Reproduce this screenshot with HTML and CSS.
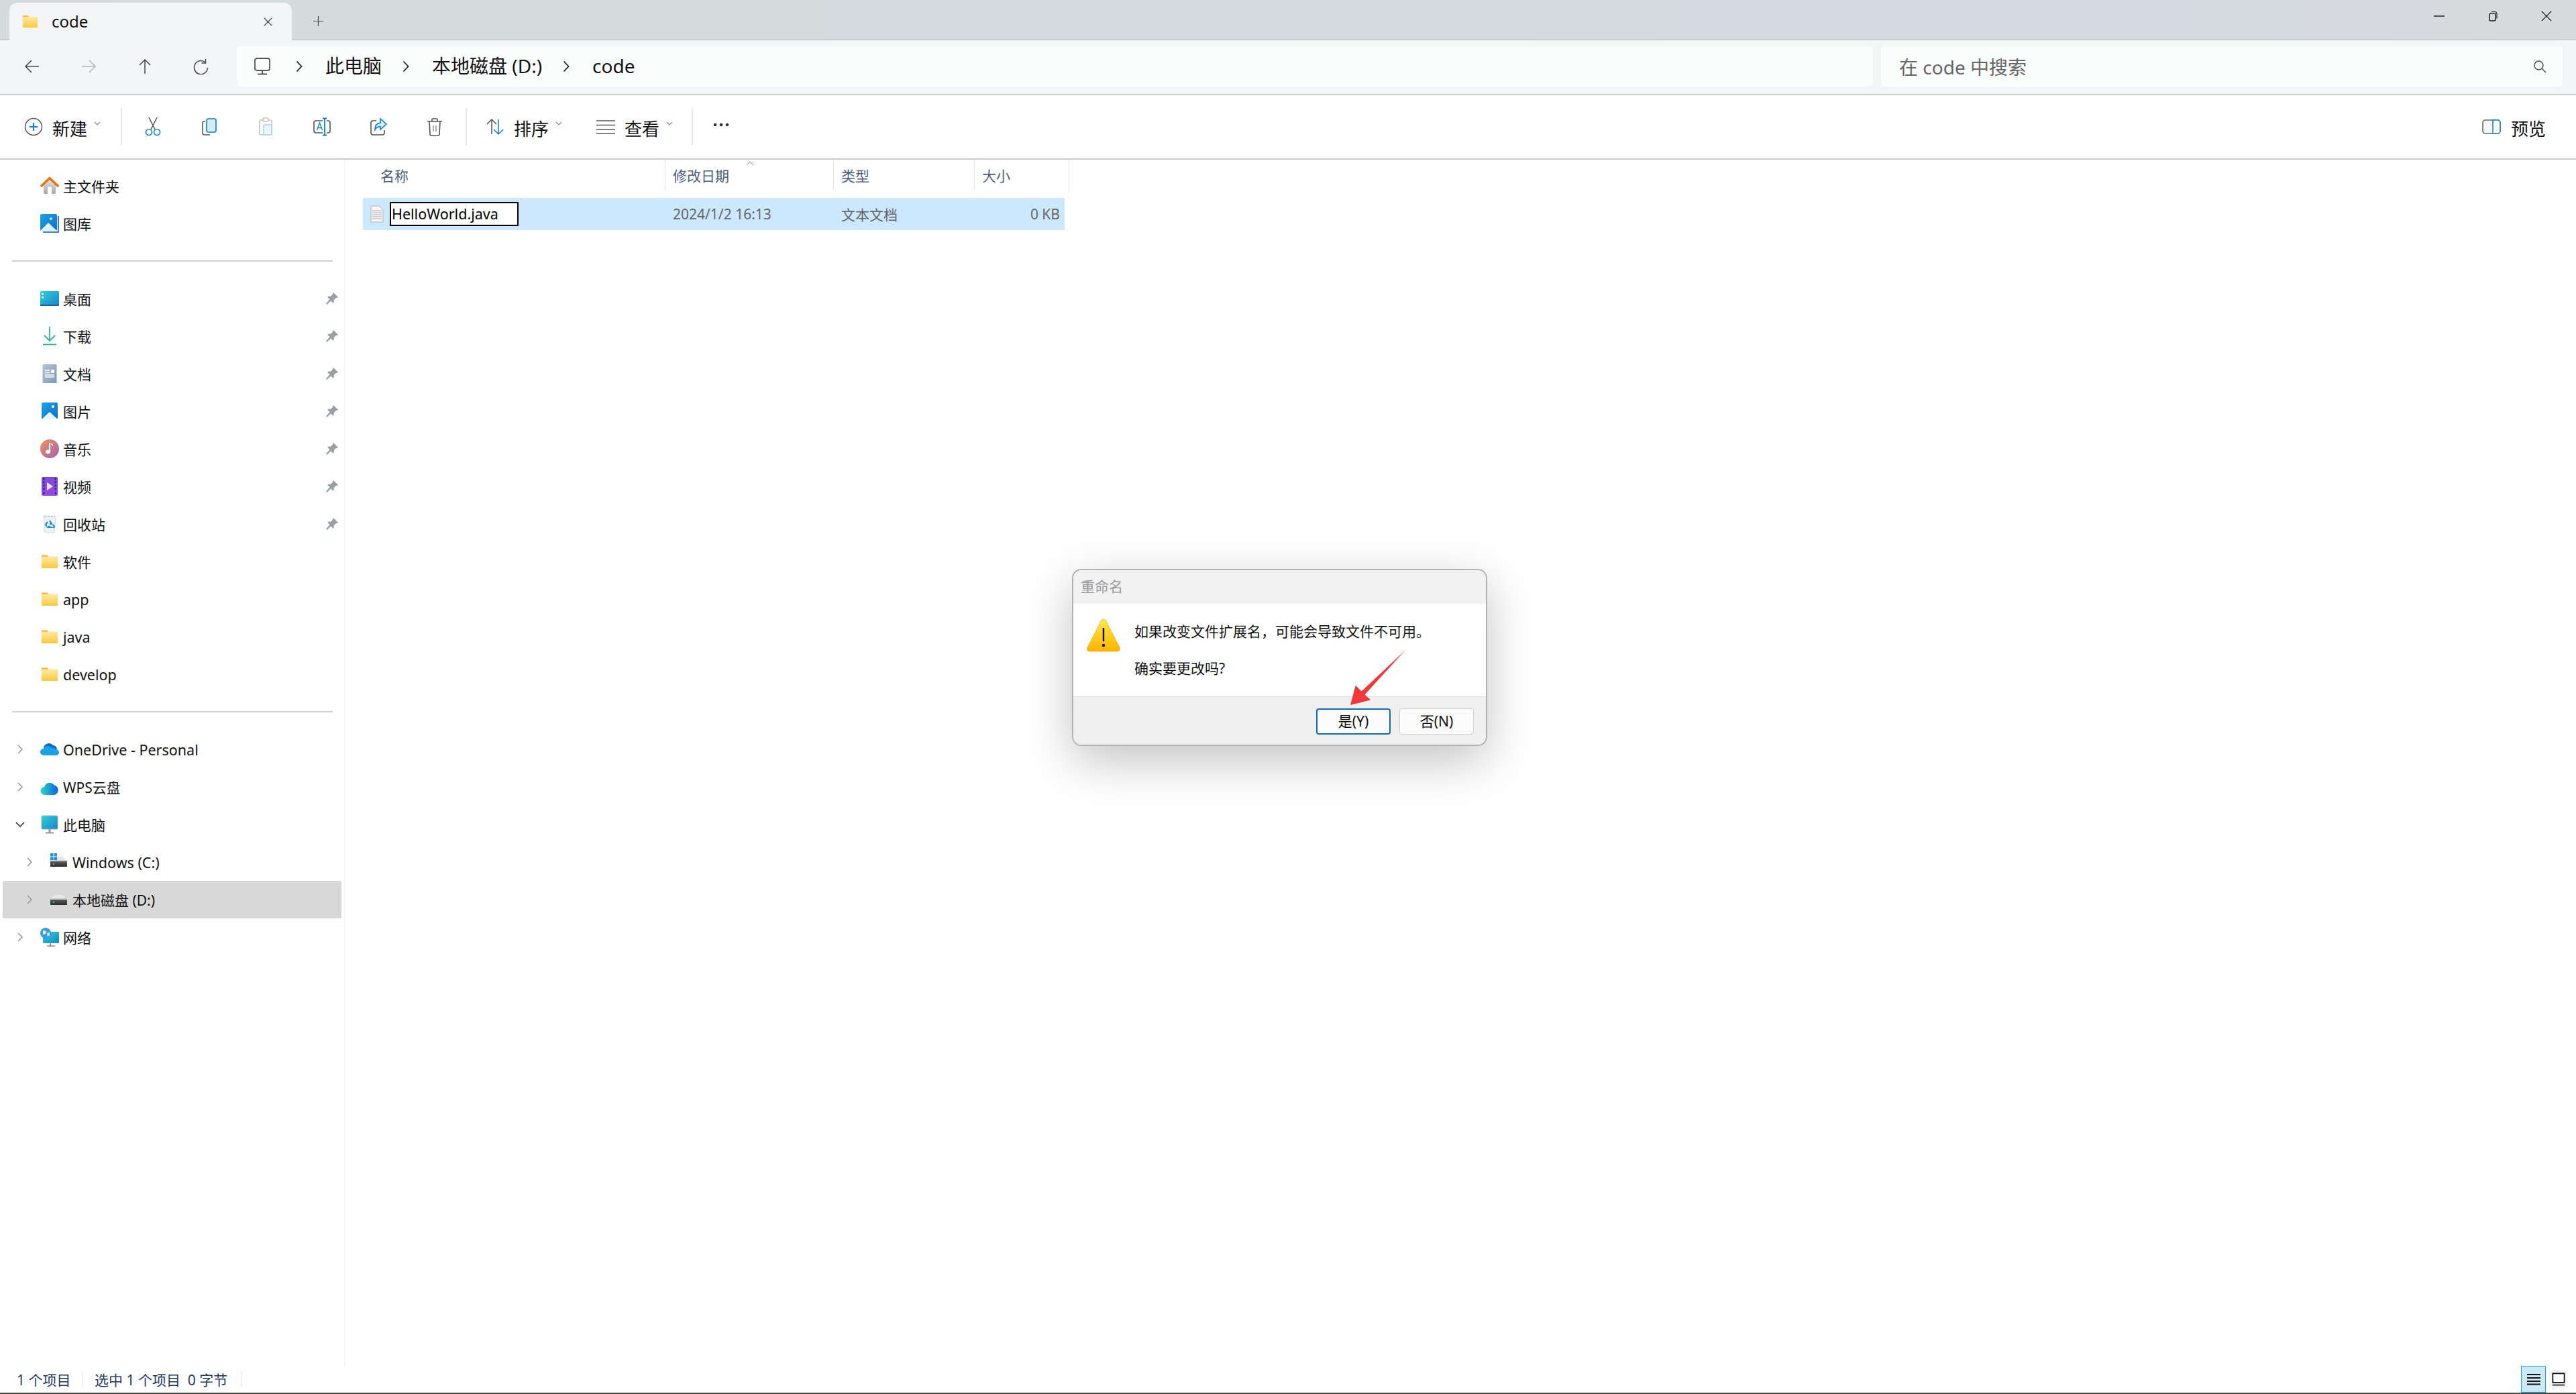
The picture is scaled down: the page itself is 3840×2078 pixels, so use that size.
FILE: index.html
```html
<!DOCTYPE html>
<html lang="zh-CN">
<head>
  <meta charset="UTF-8">
  <title>code - 文件资源管理器</title>
  <link rel="stylesheet" href="styles.css">
</head>
<body>
<!-- Shared icons -->
<svg class="icon-defs" xmlns="http://www.w3.org/2000/svg">
  <defs>
    <linearGradient id="g-folder" x1="0" y1="0" x2="0" y2="1"><stop offset="0" stop-color="#ffe9a6"/><stop offset="1" stop-color="#ffc93f"/></linearGradient>
    <linearGradient id="g-teal" x1="0" y1="0" x2="1" y2="1"><stop offset="0" stop-color="#2fd0dc"/><stop offset="1" stop-color="#1a84c4"/></linearGradient>
    <linearGradient id="g-blue" x1="0" y1="0" x2="1" y2="1"><stop offset="0" stop-color="#1ea2e8"/><stop offset="1" stop-color="#0c6fc9"/></linearGradient>
    <linearGradient id="g-music" x1="0" y1="0" x2="1" y2="1"><stop offset="0" stop-color="#f09455"/><stop offset="1" stop-color="#a85fb8"/></linearGradient>
    <linearGradient id="g-video" x1="0" y1="0" x2="0" y2="1"><stop offset="0" stop-color="#7d4bd8"/><stop offset="1" stop-color="#9a46ea"/></linearGradient>
    <linearGradient id="g-doc" x1="0" y1="0" x2="1" y2="1"><stop offset="0" stop-color="#b4c4dc"/><stop offset="1" stop-color="#7d97b4"/></linearGradient>
    <linearGradient id="g-wps" x1="0" y1="0" x2="1" y2="0"><stop offset="0" stop-color="#2ed8c4"/><stop offset="1" stop-color="#0a62e0"/></linearGradient>
    <linearGradient id="g-home" x1="0" y1="0" x2="0" y2="1"><stop offset="0" stop-color="#e2e2e2"/><stop offset="1" stop-color="#a8a8a8"/></linearGradient>
    <linearGradient id="g-warn" x1="0" y1="0" x2="0" y2="1"><stop offset="0" stop-color="#ffe94a"/><stop offset="1" stop-color="#fdb400"/></linearGradient>
    <linearGradient id="g-drive" x1="0" y1="0" x2="0" y2="1"><stop offset="0" stop-color="#5c5c5c"/><stop offset="1" stop-color="#2c2c2c"/></linearGradient>

    <symbol id="i-folder" viewBox="0 0 28 28">
      <path d="M2 4.500h8.500l3 3H2z" fill="#fdb515"/>
      <path d="M2 6.500h24v16.500a1 1 0 0 1-1 1H3a1 1 0 0 1-1-1z" fill="url(#g-folder)"/>
    </symbol>
    <symbol id="i-pin" viewBox="0 0 20 20">
      <path d="M12 1l7 7-1.500 1.200-1.300-.4-3.500 3.500.2 3.200-1.500 1.300-3.200-3.200L2.500 19 1 17.500l5.500-6.200L3.300 8l1.300-1.500 3.200.2 3.500-3.500-.4-1.300z" fill="#98a0a8"/>
    </symbol>
    <symbol id="i-drive" viewBox="0 0 25 15">
      <path d="M1 6Q5 0 9 0h7q4 0 8 6z" fill="#e6e6e6"/>
      <rect x="0" y="5" width="25" height="2" fill="#d0d0d0"/>
      <rect x="0" y="7" width="25" height="8" fill="url(#g-drive)"/>
      <rect x="4" y="10" width="2" height="2" fill="#3fd45a"/>
    </symbol>
    <symbol id="i-chev" viewBox="0 0 12 16">
      <path d="M3 2l6 6-6 6" fill="none" stroke="#9a9a9a" stroke-width="1.600"/>
    </symbol>
    <symbol id="i-caret" viewBox="0 0 12 8">
      <path d="M2 2l4 4 4-4" fill="none" stroke="#8a8a8a" stroke-width="1.200"/>
    </symbol>
    <symbol id="i-crumb" viewBox="0 0 12 20">
      <path d="M2.500 2.500L9.500 10l-7 7.500" fill="none" stroke="#222" stroke-width="1.800"/>
    </symbol>
  </defs>
</svg>

<div class="window">
  <!-- Tab strip -->
  <header class="titlebar">
    <div class="tab">
      <svg class="tab-folder"><use href="#i-folder"/></svg>
      <span class="tab-title">code</span>
      <svg class="tab-close" viewBox="0 0 16 16"><path d="M2 2l12 12M14 2L2 14" stroke="#333" stroke-width="1.300"/></svg>
    </div>
    <svg class="tab-add" viewBox="0 0 18 18"><path d="M9 1v16M1 9h16" stroke="#444" stroke-width="1.300"/></svg>
    <div class="win-btns">
      <svg class="win-btn" viewBox="0 0 16 16"><path d="M0 8h16" stroke="#222" stroke-width="1.500"/></svg>
      <svg class="win-btn" viewBox="0 0 16 16"><rect x="3" y="4" width="9" height="11" rx="2" fill="none" stroke="#222" stroke-width="1.600"/><path d="M6 1.500h5a3 3 0 0 1 3 3v7" fill="none" stroke="#222" stroke-width="1.200"/></svg>
      <svg class="win-btn" viewBox="0 0 16 16"><path d="M1 1l14 14M15 1L1 15" stroke="#222" stroke-width="1.300"/></svg>
    </div>
  </header>

  <!-- Address row -->
  <nav class="navbar">
    <div class="nav-btns">
      <svg class="nav-btn" viewBox="0 0 24 24"><path d="M22 12H2M11 3l-9 9 9 9" fill="none" stroke="#444" stroke-width="1.500"/></svg>
      <svg class="nav-btn" viewBox="0 0 24 24"><path d="M2 12h20M13 3l9 9-9 9" fill="none" stroke="#b4b4b4" stroke-width="1.500"/></svg>
      <svg class="nav-btn" viewBox="0 0 24 24"><path d="M12 23V2M4 10l8-8 8 8" fill="none" stroke="#444" stroke-width="1.500"/></svg>
      <svg class="nav-btn" viewBox="0 0 24 24"><path d="M18 6A10 10 0 1 0 21.500 14" fill="none" stroke="#444" stroke-width="1.500"/><path d="M18.500 1v6h-6" fill="none" stroke="#444" stroke-width="1.500"/></svg>
    </div>
    <div class="addressbar">
      <svg class="pc-glyph" viewBox="0 0 24 26"><rect x="1" y="1" width="22" height="18" rx="3" fill="none" stroke="#555" stroke-width="1.800"/><path d="M12 19v5M5 24.500h14" stroke="#555" stroke-width="2"/></svg>
      <svg class="crumb-sep"><use href="#i-crumb"/></svg>
      <span class="crumb">此电脑</span>
      <svg class="crumb-sep"><use href="#i-crumb"/></svg>
      <span class="crumb">本地磁盘 (D:)</span>
      <svg class="crumb-sep"><use href="#i-crumb"/></svg>
      <span class="crumb">code</span>
    </div>
    <div class="searchbar">
      <span class="search-text">在 code 中搜索</span>
      <svg class="search-icon" viewBox="0 0 20 20"><circle cx="8.500" cy="8.500" r="6.500" fill="none" stroke="#444" stroke-width="1.400"/><path d="M13 13l6 6" stroke="#444" stroke-width="1.400"/></svg>
    </div>
  </nav>

  <!-- Command bar -->
  <div class="toolbar">
    <div class="tool-group tool-new">
      <svg class="tool-icon" viewBox="0 0 28 28"><circle cx="14" cy="14" r="12.500" fill="none" stroke="#555" stroke-width="1.500"/><path d="M14 8v12M8 14h12" stroke="#0a7fd8" stroke-width="2"/></svg>
      <span class="tool-label">新建</span>
      <svg class="tool-caret"><use href="#i-caret"/></svg>
    </div>
    <div class="tool-group tool-edit">
      <svg class="tool-icon" viewBox="0 0 28 28"><path d="M8 0l9 18M20 0l-9 18" stroke="#555" stroke-width="1.500"/><circle cx="8" cy="22" r="4.500" fill="none" stroke="#0a7fd8" stroke-width="1.600"/><circle cx="20" cy="22" r="4.500" fill="none" stroke="#0a7fd8" stroke-width="1.600"/></svg>
      <svg class="tool-icon" viewBox="0 0 28 28"><path d="M8 6H6a2 2 0 0 0-2 2v15a3 3 0 0 0 3 3h8" fill="none" stroke="#555" stroke-width="1.600"/><rect x="10" y="2" width="14" height="20" rx="3" fill="#d6ecfb" stroke="#0a7fd8" stroke-width="1.600"/></svg>
      <svg class="tool-icon" viewBox="0 0 28 28"><path d="M10 4H7a2 2 0 0 0-2 2v18a2 2 0 0 0 2 2h14a2 2 0 0 0 2-2V6a2 2 0 0 0-2-2h-3" fill="none" stroke="#c6c6c6" stroke-width="1.600"/><rect x="10" y="1" width="8" height="5" rx="1" fill="none" stroke="#c6c6c6" stroke-width="1.500"/><rect x="11" y="11" width="12" height="15" rx="1.500" fill="#eaf5fd" stroke="#a6d2f2" stroke-width="1.500"/></svg>
      <svg class="tool-icon" viewBox="0 0 28 28"><path d="M15 5H5a3 3 0 0 0-3 3v12a3 3 0 0 0 3 3h10M21 5h2a3 3 0 0 1 3 3v12a3 3 0 0 1-3 3h-2" fill="none" stroke="#555" stroke-width="1.600"/><path d="M18 2v24M15 1.500h6M15 26.500h6" stroke="#0a7fd8" stroke-width="1.800"/><path d="M6.500 19l4-11 4 11M8 15.500h5" fill="none" stroke="#0a7fd8" stroke-width="1.300"/></svg>
      <svg class="tool-icon" viewBox="0 0 28 28"><path d="M11 5H6a3 3 0 0 0-3 3v15a3 3 0 0 0 3 3h14a3 3 0 0 0 3-3v-4" fill="none" stroke="#555" stroke-width="1.600"/><path d="M17 2l9 8-9 8v-4.500c-4 0-6 2-8 5 0-6 3-10 8-10.500z" fill="#d6ecfb" stroke="#0a7fd8" stroke-width="1.600"/></svg>
      <svg class="tool-icon" viewBox="0 0 28 28"><path d="M3 6h22M10 6V3a1 1 0 0 1 1-1h6a1 1 0 0 1 1 1v3M6 6l1 19a2 2 0 0 0 2 2h10a2 2 0 0 0 2-2l1-19" fill="none" stroke="#555" stroke-width="1.600"/><path d="M12 12v9M16 12v9" stroke="#777" stroke-width="1.200"/></svg>
    </div>
    <div class="tool-group tool-view">
      <svg class="tool-icon" viewBox="0 0 28 28"><path d="M9 25V3M2 10l7-7 7 7" fill="none" stroke="#555" stroke-width="1.500"/><path d="M19 3v22M12 18l7 7 7-7" fill="none" stroke="#0a7fd8" stroke-width="1.500"/></svg>
      <span class="tool-label">排序</span>
      <svg class="tool-caret"><use href="#i-caret"/></svg>
      <svg class="tool-icon view-icon" viewBox="0 0 28 28"><path d="M0 5h28M0 11.500h28M0 18h28M0 24h28" stroke="#555" stroke-width="1.500"/></svg>
      <span class="tool-label">查看</span>
      <svg class="tool-caret"><use href="#i-caret"/></svg>
    </div>
    <div class="tool-group tool-more">
      <svg class="more-icon" viewBox="0 0 24 6"><circle cx="3" cy="3" r="2.300" fill="#333"/><circle cx="12" cy="3" r="2.300" fill="#333"/><circle cx="21" cy="3" r="2.300" fill="#333"/></svg>
    </div>
    <div class="tool-preview">
      <svg class="preview-icon" viewBox="0 0 28 22"><rect x="1" y="1" width="26" height="20" rx="4" fill="#f4f6f8" stroke="#666" stroke-width="1.600"/><path d="M16 1h7a4 4 0 0 1 4 4v12a4 4 0 0 1-4 4h-7z" fill="#fff" stroke="#1384dc" stroke-width="1.600"/></svg>
      <span class="tool-label">预览</span>
    </div>
  </div>

  <div class="content">
    <!-- Navigation pane -->
    <aside class="sidebar">
      <div class="nav-row"><span class="chev"></span>
        <svg class="nav-icon" viewBox="0 0 28 28"><path d="M5 13l9-8 9 8v11a2 2 0 0 1-2 2h-4v-8a3 3 0 0 0-6 0v8H7a2 2 0 0 1-2-2z" fill="url(#g-home)"/><path d="M1 15L14 2.500 27 15" fill="none" stroke="#e8710a" stroke-width="3.400"/></svg>
        <span>主文件夹</span></div>
      <div class="nav-row"><span class="chev"></span>
        <svg class="nav-icon" viewBox="0 0 28 28"><path d="M28 3v25H5l-2-2h23V3z" fill="#3a7fcf"/><rect x="0" y="0" width="25" height="25" rx="2" fill="url(#g-blue)"/><path d="M0 25l12-12 13 12z" fill="#dcf0ff"/><circle cx="16" cy="7" r="1.800" fill="#fff"/></svg>
        <span>图库</span></div>
      <hr class="nav-divider">

      <div class="nav-row"><span class="chev"></span>
        <svg class="nav-icon" viewBox="0 0 28 28"><rect x="0" y="3" width="28" height="22" rx="2" fill="url(#g-teal)"/><rect x="2" y="6" width="3" height="2.500" fill="#fff"/><rect x="2" y="11" width="3" height="2.500" fill="#dff"/><rect x="0" y="23" width="28" height="2" fill="#1668a0"/></svg>
        <span>桌面</span><svg class="pin"><use href="#i-pin"/></svg></div>
      <div class="nav-row"><span class="chev"></span>
        <svg class="nav-icon" viewBox="0 0 28 28"><path d="M14 0v21M6 13l8 8 8-8" fill="none" stroke="#2cb79a" stroke-width="1.800"/><path d="M4 26.500h20" stroke="#2cb79a" stroke-width="1.800"/></svg>
        <span>下载</span><svg class="pin"><use href="#i-pin"/></svg></div>
      <div class="nav-row"><span class="chev"></span>
        <svg class="nav-icon" viewBox="0 0 28 28"><rect x="3.500" y="0" width="21" height="28" rx="1.500" fill="url(#g-doc)"/><path d="M7 9h7M7 12.500h7M7 16h14M7 19h14" stroke="#fff" stroke-width="1.300"/><rect x="16" y="8" width="5" height="5" fill="#fff"/></svg>
        <span>文档</span><svg class="pin"><use href="#i-pin"/></svg></div>
      <div class="nav-row"><span class="chev"></span>
        <svg class="nav-icon" viewBox="0 0 28 28"><rect x="2" y="1" width="24" height="25" rx="2" fill="url(#g-blue)"/><path d="M2 26l12-11 12 11z" fill="#e6f4ff"/><circle cx="19" cy="7" r="2" fill="#fff"/></svg>
        <span>图片</span><svg class="pin"><use href="#i-pin"/></svg></div>
      <div class="nav-row"><span class="chev"></span>
        <svg class="nav-icon" viewBox="0 0 28 28"><circle cx="14" cy="14" r="14" fill="url(#g-music)"/><path d="M15 6v12.500a3.500 3 0 1 1-2-2.700V5l6 2v3z" fill="#fff"/></svg>
        <span>音乐</span><svg class="pin"><use href="#i-pin"/></svg></div>
      <div class="nav-row"><span class="chev"></span>
        <svg class="nav-icon" viewBox="0 0 28 28"><rect x="2" y="0" width="24" height="28" rx="2" fill="url(#g-video)"/><path d="M4 3h2.500M4 8h2.500M4 13h2.500M4 18h2.500M4 24h2.500M21.500 3H24M21.500 8H24M21.500 13H24M21.500 18H24M21.500 24H24" stroke="#3e2a70" stroke-width="3"/><path d="M10 8l9 6-9 6z" fill="#e8e4f8"/></svg>
        <span>视频</span><svg class="pin"><use href="#i-pin"/></svg></div>
      <div class="nav-row"><span class="chev"></span>
        <svg class="nav-icon" viewBox="0 0 28 28"><path d="M5 3h18l-2 24H7z" fill="#eef1f3" stroke="#d6dadd"/><path d="M6 2.500h16" stroke="#b8bcc0" stroke-dasharray="3 2" stroke-width="1.500"/><path d="M14 9l3 5h-3M10 18l-2-3 3-4M18 19h-6l2-2M19 15l2 3-2 2" fill="none" stroke="#1a8be0" stroke-width="2.200"/></svg>
        <span>回收站</span><svg class="pin"><use href="#i-pin"/></svg></div>
      <div class="nav-row"><span class="chev"></span><svg class="nav-icon"><use href="#i-folder"/></svg><span>软件</span></div>
      <div class="nav-row"><span class="chev"></span><svg class="nav-icon"><use href="#i-folder"/></svg><span class="latin">app</span></div>
      <div class="nav-row"><span class="chev"></span><svg class="nav-icon"><use href="#i-folder"/></svg><span class="latin">java</span></div>
      <div class="nav-row"><span class="chev"></span><svg class="nav-icon"><use href="#i-folder"/></svg><span class="latin">develop</span></div>
      <hr class="nav-divider">

      <div class="nav-row"><svg class="chev"><use href="#i-chev"/></svg>
        <svg class="nav-icon" viewBox="0 0 28 28"><path d="M5 12a8 8 0 0 1 14-4 6 6 0 0 1 6 6l-12 3z" fill="#0a6cc4"/><path d="M5 23a5 5 0 0 1 0-10 7 7 0 0 1 12-1 5 5 0 0 1 6 2 4.500 4.500 0 0 1 1 9z" fill="#1f9fe6"/></svg>
        <span class="latin">OneDrive - Personal</span></div>
      <div class="nav-row"><svg class="chev"><use href="#i-chev"/></svg>
        <svg class="nav-icon" viewBox="0 0 28 28"><path d="M7 26a6 6 0 0 1-1-12A8.500 8.500 0 0 1 21 11.500 7.500 7.500 0 0 1 21 26z" fill="url(#g-wps)"/></svg>
        <span>WPS云盘</span></div>
      <div class="nav-row"><svg class="chev chev-open" viewBox="0 0 16 12"><path d="M2 3l6 6 6-6" fill="none" stroke="#333" stroke-width="1.600"/></svg>
        <svg class="nav-icon" viewBox="0 0 28 28"><rect x="2" y="1" width="24" height="20" rx="1.500" fill="url(#g-teal)" stroke="#9ab0bc"/><path d="M14 21v5" stroke="#8a9aa4" stroke-width="3"/><path d="M8 26.500h12" stroke="#8a9aa4" stroke-width="2"/></svg>
        <span>此电脑</span></div>
      <div class="nav-row nav-sub"><svg class="chev"><use href="#i-chev"/></svg>
        <span class="drive-slot">
          <svg class="drive-icon"><use href="#i-drive"/></svg>
          <svg class="win-logo" viewBox="0 0 10 10"><path d="M0 0h4.500v4.500H0zM5.500 0H10v4.500H5.500zM0 5.500h4.500V10H0zM5.500 5.500H10V10H5.500z" fill="#1c8fe4"/></svg>
        </span>
        <span class="latin">Windows (C:)</span></div>
      <div class="nav-row nav-sub nav-current"><svg class="chev"><use href="#i-chev"/></svg>
        <span class="drive-slot"><svg class="drive-icon"><use href="#i-drive"/></svg></span>
        <span>本地磁盘 (D:)</span></div>
      <div class="nav-row"><svg class="chev"><use href="#i-chev"/></svg>
        <svg class="nav-icon" viewBox="0 0 28 28"><rect x="4" y="6" width="24" height="17" rx="1" fill="url(#g-teal)"/><path d="M15 23v4M10 27.500h12" stroke="#7c8c96" stroke-width="2"/><circle cx="8" cy="8" r="8" fill="#3b9ee0"/><path d="M4 4l5 1-1 4-4 1zM10 8l4-1v4l-3 2z" fill="#dff0fa"/></svg>
        <span>网络</span></div>
    </aside>

    <!-- File list -->
    <main class="files">
      <div class="list-head">
        <div class="col-head">名称</div>
        <div class="col-head">修改日期<svg class="sort-caret" viewBox="0 0 12 7"><path d="M1 6l5-5 5 5" fill="none" stroke="#888" stroke-width="1"/></svg></div>
        <div class="col-head">类型</div>
        <div class="col-head">大小</div>
      </div>
      <div class="file-row">
        <div class="file-name">
          <svg class="file-icon" viewBox="0 0 20 26"><path d="M1 1h12l6 6v18H1z" fill="#f6f6f6" stroke="#aeb4ba"/><path d="M3 8h14M3 11h14M3 14h14M3 17h14M3 20h14" stroke="#c4c4c4" stroke-width="1.500"/></svg>
          <div class="name-edit">HelloWorld.java</div>
        </div>
        <div class="file-meta">2024/1/2 16:13</div>
        <div class="file-meta">文本文档</div>
        <div class="file-meta file-size">0 KB</div>
      </div>
    </main>
  </div>

  <footer class="statusbar">
    <span class="status-item status-count">1 个项目</span>
    <span class="status-item status-sel">选中 1 个项目&nbsp; 0 字节</span>
    <div class="view-switch">
      <span class="view-btn view-btn-on"><svg viewBox="0 0 22 18"><path d="M1 2h20M1 7h20M1 12h20M1 16.500h20" stroke="#111" stroke-width="1.800"/></svg></span>
      <span class="view-btn"><svg viewBox="0 0 22 22"><rect x="1.500" y="1.500" width="19" height="15" fill="#fff" stroke="#111" stroke-width="2"/><path d="M1 20.500h20" stroke="#111" stroke-width="1.800"/></svg></span>
    </div>
  </footer>

  <!-- Rename warning -->
  <div class="dialog">
    <div class="dialog-title">重命名</div>
    <div class="dialog-body">
      <svg class="warn-icon" viewBox="0 0 50 50"><path d="M25 1c2 0 3 1 4 3l20 39c1 3 0 6-3 6H4c-3 0-4-3-3-6L21 4c1-2 2-3 4-3z" fill="url(#g-warn)" stroke="#eaa31c" stroke-width=".6"/><path d="M25 14v20" stroke="#111" stroke-width="2.400"/><circle cx="25" cy="40" r="2.200" fill="#111"/></svg>
      <div class="dialog-text">
        <p>如果改变文件扩展名，可能会导致文件不可用。</p>
        <p>确实要更改吗?</p>
      </div>
    </div>
    <div class="dialog-foot">
      <button class="dlg-btn dlg-btn-default">是(Y)</button>
      <button class="dlg-btn">否(N)</button>
    </div>
  </div>

  <svg class="mark-arrow" viewBox="0 0 90 90"><path d="M87 1L25 69l9 8L3 85l8-30 9 9z" fill="#f0383c"/></svg>
</div>
</body>
</html>
```
FILE: styles.css
```css
* {
  box-sizing: border-box;
}

html, body {
  margin: 0;
  padding: 0;
  height: 100%;
  background-color: #fff;
  font-family: "Noto Sans", "Noto Sans CJK SC", sans-serif;
  color: #111;
}

.icon-defs {
  display: block;
  width: 0;
  height: 0;
}

.window {
  position: relative;
  display: flex;
  flex-direction: column;
  height: 2078px;
  overflow: hidden;
}

/* Tab strip */
.titlebar {
  flex: none;
  display: flex;
  align-items: flex-end;
  height: 60px;
  padding-left: 14px;
  background: linear-gradient(90deg, #d4dcdb, #d3dae2 80%, #d8dadc);
  border-bottom: 2px solid #c9cdd0;
}

.tab {
  display: flex;
  align-items: center;
  width: 421px;
  height: 56px;
  margin-bottom: -2px;
  padding: 0 28px 0 18px;
  background-color: #f3f5f6;
  border-radius: 12px 12px 0 0;
}

.tab-folder {
  width: 26px;
  height: 26px;
  flex: none;
}

.tab-title {
  margin-left: 19px;
  font-size: 24px;
  line-height: 30px;
}

.tab-close {
  width: 15px;
  height: 15px;
  margin-left: auto;
}

.tab-add {
  width: 17px;
  height: 17px;
  margin: 0 0 18px 31px;
}

.win-btns {
  display: flex;
  align-items: center;
  gap: 64px;
  margin-left: auto;
  margin-bottom: 26px;
  padding-right: 36px;
}

.win-btn {
  width: 16px;
  height: 16px;
}

/* Address row */
.navbar {
  flex: none;
  display: flex;
  align-items: center;
  height: 82px;
  background-color: #f3f5f6;
  border-bottom: 2px solid #c8cccd;
  padding-bottom: 2px;
}

.nav-btns {
  display: flex;
  width: 353px;
  padding-left: 36px;
  gap: 60px;
}

.nav-btn {
  width: 24px;
  height: 24px;
  flex: none;
}

.addressbar {
  display: flex;
  align-items: center;
  width: 2439px;
  height: 60px;
  padding-left: 26px;
  background-color: #fbfcfc;
  border-radius: 6px;
  font-size: 28px;
}

.pc-glyph {
  width: 24px;
  height: 26px;
  margin-right: 37px;
}

.crumb-sep {
  width: 12px;
  height: 20px;
  flex: none;
}

.crumb {
  margin: 0 30px 2px 33px;
  line-height: 36px;
}

.searchbar {
  display: flex;
  align-items: center;
  width: 1016px;
  height: 60px;
  margin-left: 12px;
  padding: 0 24px 0 27px;
  background-color: #fbfcfc;
  border-radius: 6px;
  font-size: 28px;
  color: #666;
}

.search-icon {
  width: 20px;
  height: 20px;
  margin-left: auto;
}

/* Command bar */
.toolbar {
  flex: none;
  display: flex;
  align-items: center;
  height: 96px;
  border-bottom: 2px solid #c8cdcd;
  padding-left: 36px;
  padding-right: 45px;
}

.tool-group {
  display: flex;
  align-items: center;
  height: 56px;
  border-right: 2px solid #e8e8e8;
}

.tool-new {
  width: 146px;
}

.tool-edit {
  width: 514px;
  gap: 56px;
  padding-left: 32px;
}

.tool-view {
  width: 337px;
  padding-left: 28px;
}

.tool-more {
  border-right: 0;
  padding-left: 30px;
}

.tool-icon {
  width: 28px;
  height: 28px;
  flex: none;
}

.tool-label {
  margin: 6px 0 0 14px;
  font-size: 26px;
  line-height: 32px;
}

.tool-caret {
  width: 12px;
  height: 8px;
  margin: 0 0 10px 9px;
}

.view-icon {
  margin-left: 50px;
}

.more-icon {
  width: 24px;
  height: 6px;
  margin-bottom: 6px;
}

.tool-preview {
  display: flex;
  align-items: center;
  margin-left: auto;
}

.preview-icon {
  width: 28px;
  height: 22px;
}

.tool-preview .tool-label {
  margin-left: 15px;
}

/* Body */
.content {
  flex: 1;
  display: flex;
  min-height: 0;
}

.sidebar {
  width: 515px;
  flex: none;
  padding: 11px 4px 0;
  border-right: 2px solid #f5f5f5;
}

.nav-row {
  display: flex;
  align-items: center;
  height: 56px;
  padding-left: 14px;
  font-size: 21px;
  border-radius: 3px;
}

.latin {
  font-size: 21.5px;
}

.chev {
  width: 24px;
  height: 16px;
  margin-right: 16px;
  flex: none;
}

.chev-open {
  height: 12px;
}

.nav-icon {
  width: 28px;
  height: 28px;
  margin: 0 6px 0 2px;
  flex: none;
}

.pin {
  width: 20px;
  height: 20px;
  margin-left: auto;
  margin-right: 4px;
}

.nav-divider {
  height: 2px;
  margin: 27px 13px 27px 14px;
  border: 0;
  background-color: #d2d2d2;
}

.nav-sub {
  padding-left: 28px;
}

.nav-current {
  background-color: #d8d8d8;
}

.drive-slot {
  position: relative;
  display: block;
  width: 25px;
  height: 24px;
  margin: 0 8px 0 3px;
  flex: none;
}

.drive-icon {
  position: absolute;
  left: 0;
  bottom: 5px;
  width: 25px;
  height: 15px;
}

.nav-current .drive-icon {
  bottom: 4px;
}

.win-logo {
  position: absolute;
  left: 0;
  top: -1px;
  width: 10px;
  height: 10px;
}

/* File list */
.files {
  flex: 1;
  min-width: 0;
}

.list-head {
  display: grid;
  grid-template-columns: 436px 251px 210px 141px;
  width: 1038px;
  height: 46px;
  margin-left: 41px;
}

.col-head {
  position: relative;
  display: flex;
  align-items: center;
  padding-left: 11px;
  font-size: 21px;
  color: #4c607a;
  border-right: 1px solid #e6e8ea;
}

.sort-caret {
  position: absolute;
  left: 120px;
  top: 2px;
  width: 12px;
  height: 7px;
}

.file-row {
  display: grid;
  grid-template-columns: 451px 251px 210px 134px;
  align-items: center;
  width: 1046px;
  height: 48px;
  margin: 11px 0 0 26px;
  background-color: #cce8ff;
  border-radius: 2px;
}

.file-name {
  display: flex;
  align-items: center;
  padding-left: 11px;
}

.file-icon {
  width: 20px;
  height: 26px;
  flex: none;
}

.name-edit {
  width: 192px;
  height: 36px;
  margin-left: 9px;
  padding-left: 1px;
  background-color: #fff;
  border: 2px solid #000;
  font-size: 21.5px;
  line-height: 32px;
  color: #000;
}

.file-meta {
  padding-left: 11px;
  font-size: 21px;
  color: #666;
}

.file-size {
  padding: 0 7px 0 0;
  text-align: right;
}

/* Status bar */
.statusbar {
  flex: none;
  display: flex;
  align-items: center;
  height: 42px;
  border-bottom: 2px solid #4a4a40;
  font-size: 21px;
  color: #1f3a63;
}

.status-item {
  display: flex;
  align-items: center;
  height: 26px;
  border-right: 2px solid #f0f1f2;
}

.status-count {
  width: 124px;
  padding-left: 25px;
}

.status-sel {
  width: 237px;
  padding-left: 17px;
  white-space: nowrap;
}

.view-switch {
  display: flex;
  align-items: center;
  gap: 5px;
  margin-left: auto;
  padding-right: 12px;
  height: 100%;
}

.view-btn {
  display: flex;
  align-items: center;
  justify-content: center;
  width: 28px;
  height: 28px;
  background-color: #f4f4f4;
  border-radius: 4px;
}

.view-btn-on {
  width: 37px;
  height: 40px;
  background-color: #cce8f5;
  border: 1px solid #1ba1e2;
  border-radius: 0;
}

.view-btn svg {
  width: 22px;
  height: 20px;
}

/* Dialog */
.dialog {
  position: absolute;
  left: 1598px;
  top: 848px;
  display: flex;
  flex-direction: column;
  width: 619px;
  height: 264px;
  background-color: #fff;
  border: 2px solid #b2b2b2;
  border-radius: 14px;
  box-shadow: 0 22px 70px rgba(0, 0, 0, 0.24);
  overflow: hidden;
  font-size: 21px;
}

.dialog-title {
  flex: none;
  height: 50px;
  padding-left: 11px;
  background-color: #f2f2f2;
  color: #999;
  line-height: 48px;
}

.dialog-body {
  flex: 1;
  display: flex;
  padding: 22px 0 0 20px;
}

.warn-icon {
  width: 50px;
  height: 50px;
  flex: none;
}

.dialog-text {
  margin: 5px 0 0 21px;
}

.dialog-text p {
  margin: 0 0 27px;
  line-height: 28px;
}

.dialog-foot {
  flex: none;
  display: flex;
  justify-content: flex-end;
  gap: 13px;
  height: 72px;
  padding: 17px 18px 0 0;
  background-color: #f0f0f0;
  border-top: 1px solid #dfdfdf;
}

.dlg-btn {
  width: 111px;
  height: 39px;
  padding: 0;
  background-color: #fbfbfb;
  border: 1px solid #d0d0d0;
  border-radius: 4px;
  font: inherit;
  line-height: 1;
  color: #111;
}

.dlg-btn-default {
  border: 2px solid #0f6cbd;
}

.mark-arrow {
  position: absolute;
  left: 2009px;
  top: 968px;
  width: 90px;
  height: 88px;
}
```
